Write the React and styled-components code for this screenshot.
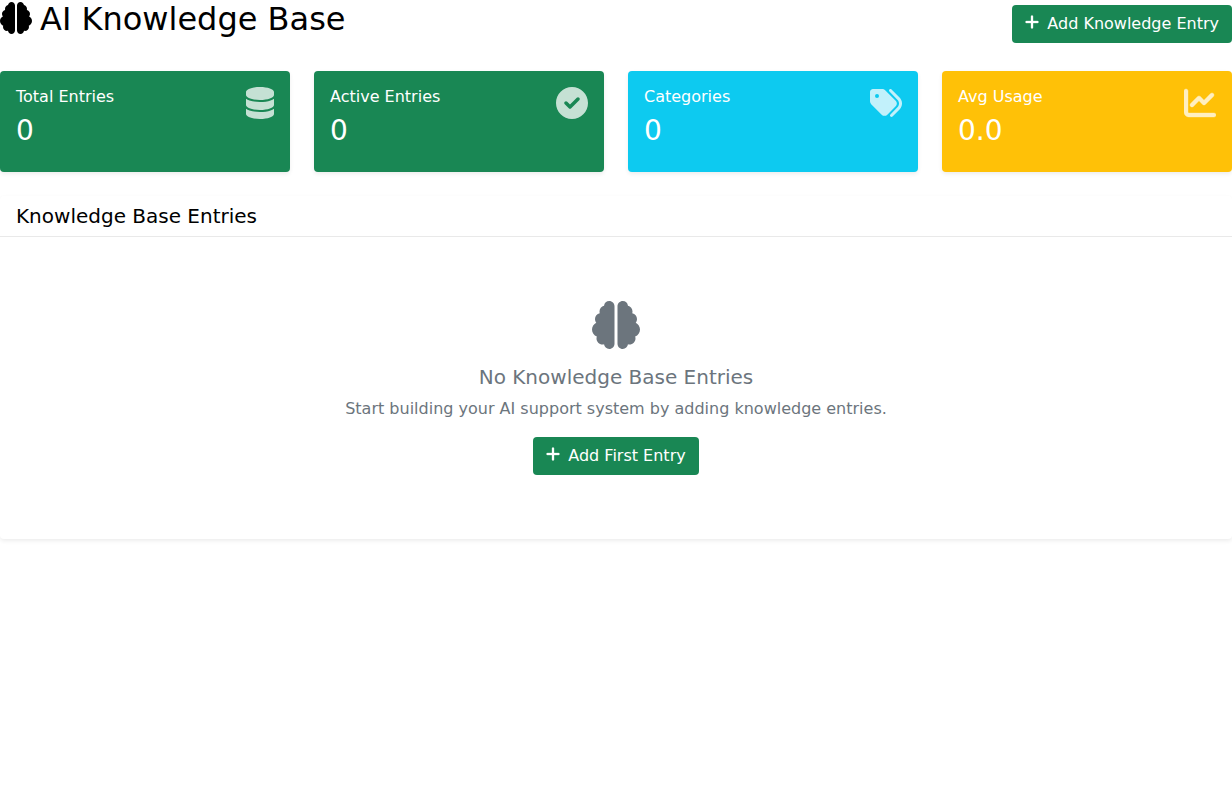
import React from "react";
import styled, { createGlobalStyle } from "styled-components";
import { FaBrain, FaPlus, FaDatabase, FaTags, FaChartLine } from "react-icons/fa6";

const GlobalStyle = createGlobalStyle`
  *, *::before, *::after { box-sizing: border-box; }
  body {
    margin: 0;
    background: #fff;
    color: #000;
    font-family: "DejaVu Sans", sans-serif;
    font-size: 16px;
    line-height: 24px;
  }
  h1, h2, h3, p { margin: 0; font-weight: 400; }
`;

const Page = styled.main`
  min-height: 100vh;
`;

const PageHeader = styled.header`
  display: flex;
  flex-wrap: wrap;
  justify-content: space-between;
  align-items: center;
  margin-bottom: 23px;
`;

const Title = styled.h1`
  display: flex;
  align-items: center;
  gap: 8px;
  padding-bottom: 10px;
  font-size: 32px;
  line-height: 38px;

  svg { margin-bottom: 2px; }
`;

const Button = styled.button`
  display: inline-flex;
  align-items: center;
  gap: 8px;
  height: 38px;
  padding: 0 13px;
  border: 0;
  border-radius: 4px;
  background: #198754;
  color: #fff;
  font: inherit;
  cursor: pointer;

  svg {
    width: 14px;
    height: 16px;
    margin-bottom: 4px;
    stroke-width: 10;
  }
  &:hover { background: #157347; }
`;

const Stats = styled.section`
  display: grid;
  grid-template-columns: repeat(4, 1fr);
  gap: 24px;
  margin-bottom: 24px;
`;

const StatCard = styled.article`
  display: flex;
  justify-content: space-between;
  align-items: flex-start;
  padding: 16px 16px 25px;
  border-radius: 4px;
  background: ${(p) => p.$color};
  color: #fff;
  box-shadow: 0 2px 4px rgba(0, 0, 0, 0.075);
`;

const StatIcon = styled.span`
  display: flex;
  opacity: 0.75;

  svg {
    width: ${(p) => p.$width}px;
    height: 32px;
    stroke-width: ${(p) => p.$stroke || 0};
  }
`;

const StatLabel = styled.h2`
  font-size: 16px;
  line-height: 20px;
  margin-bottom: 8px;
`;

const StatValue = styled.p`
  font-size: 28px;
  line-height: 32px;
`;

const Panel = styled.section`
  border-radius: 4px;
  background: #fff;
  box-shadow: 0 2px 4px rgba(0, 0, 0, 0.075);
`;

const PanelTitle = styled.h2`
  padding: 8px 16px;
  border-bottom: 1px solid #e9e9e9;
  font-size: 20px;
  line-height: 24px;
`;

const EmptyState = styled.div`
  display: flex;
  flex-direction: column;
  align-items: center;
  padding: 64px 16px;
  color: #6c757d;
  text-align: center;
`;

const EmptyTitle = styled.h3`
  margin: 16px 0 8px;
  font-size: 20px;
  line-height: 24px;
`;

const EmptyText = styled.p`
  margin-bottom: 16px;
`;

function CircleCheck() {
  return (
    <svg viewBox="0 0 512 512" fill="currentColor" aria-hidden="true">
      <path d="M0 256C0 114.6 114.6 0 256 0C397.4 0 512 114.6 512 256C512 397.4 397.4 512 256 512C114.6 512 0 397.4 0 256zM371.8 211.8C382.7 200.9 382.7 183.1 371.8 172.2C360.9 161.3 343.1 161.3 332.2 172.2L224 280.4L179.8 236.2C168.9 225.3 151.1 225.3 140.2 236.2C129.3 247.1 129.3 264.9 140.2 275.8L204.2 339.8C215.1 350.7 232.9 350.7 243.8 339.8L371.8 211.8z" />
    </svg>
  );
}

const stats = [
  { label: "Total Entries", value: "0", color: "#198754", Icon: FaDatabase, iconWidth: 28 },
  { label: "Active Entries", value: "0", color: "#198754", Icon: CircleCheck, iconWidth: 32 },
  { label: "Categories", value: "0", color: "#0dcaf0", Icon: FaTags, iconWidth: 32 },
  { label: "Avg Usage", value: "0.0", color: "#ffc107", Icon: FaChartLine, iconWidth: 32, iconStroke: 6 },
];

export default function App() {
  return (
    <Page>
      <GlobalStyle />
      <PageHeader>
        <Title><FaBrain size={32} />AI Knowledge Base</Title>
        <Button type="button"><FaPlus />Add Knowledge Entry</Button>
      </PageHeader>
      <Stats>
        {stats.map(({ label, value, color, Icon, iconWidth, iconStroke }) => (
          <StatCard key={label} $color={color}>
            <div>
              <StatLabel>{label}</StatLabel>
              <StatValue>{value}</StatValue>
            </div>
            <StatIcon $width={iconWidth} $stroke={iconStroke}><Icon /></StatIcon>
          </StatCard>
        ))}
      </Stats>
      <Panel>
        <PanelTitle>Knowledge Base Entries</PanelTitle>
        <EmptyState>
          <FaBrain size={48} />
          <EmptyTitle>No Knowledge Base Entries</EmptyTitle>
          <EmptyText>Start building your AI support system by adding knowledge entries.</EmptyText>
          <Button type="button"><FaPlus />Add First Entry</Button>
        </EmptyState>
      </Panel>
    </Page>
  );
}
